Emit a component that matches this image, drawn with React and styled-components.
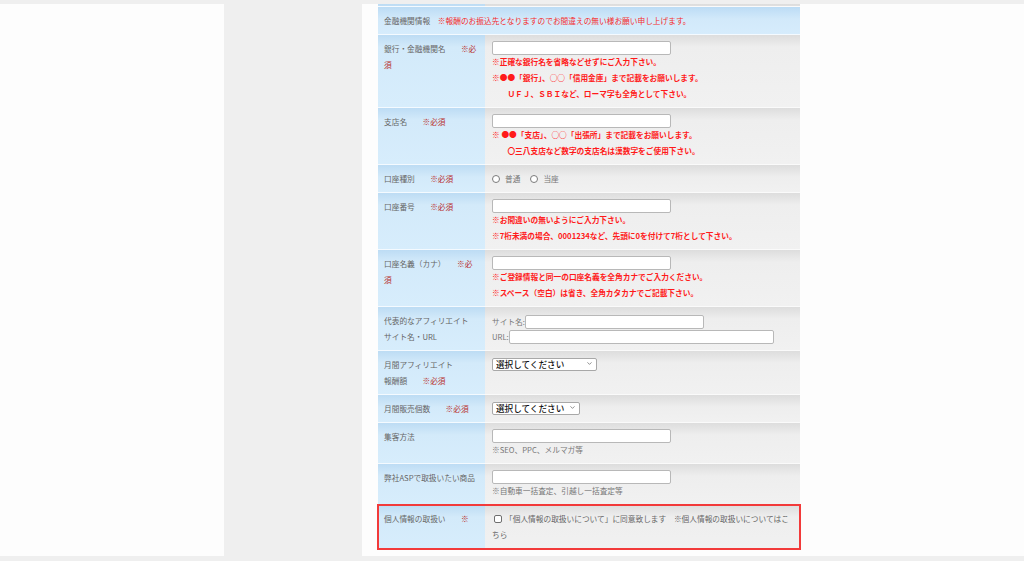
import React from 'react';
import styled, { createGlobalStyle } from 'styled-components';
import { ChevronDown } from 'lucide-react';

const GlobalStyle = createGlobalStyle`
    html, body {
        margin: 0;
        padding: 0;
        background: #efefef;
    }
    body {
        font-family: "Noto Sans CJK JP", "Noto Sans", sans-serif;
        font-size: 7.7px;
    }
`;

const Page = styled.div`
    height: 561px;
    padding-top: 4px;
    box-sizing: border-box;
    background: #efefef;
    overflow: hidden;
`;

const Main = styled.div`
    display: flex;
    height: 552px;
`;

const SideWhite = styled.div`
    width: 224px;
    background: #fdfdfd;
`;

const SideGray = styled.div`
    width: 138px;
    background: #efefef;
`;

const Content = styled.div`
    flex: 1;
    background: #fdfdfd;
    padding-left: 16px;
    overflow: hidden;
`;

const FormTable = styled.div`
    width: 422px;
    display: flex;
    flex-direction: column;
`;

const Row = styled.div`
    display: grid;
    grid-template-columns: 107px 1fr;
    ${p => p.$alert && `
        outline: 2px solid #f23a3a;
        outline-offset: -1px;
    `}
`;

const Label = styled.div`
    padding: ${p => (p.$stub ? '0' : '6px 8px 5px 6px')};
    height: ${p => (p.$stub ? '2px' : 'auto')};
    background: linear-gradient(#bddcf4, #d3eafa 12px, #d7edfc);
    border-bottom: 1px solid #f4faff;
    color: #666;
    line-height: 16px;
`;

const Data = styled.div`
    padding: ${p => (p.$stub ? '0' : '6px 7px 5px 7px')};
    height: ${p => (p.$stub ? '2px' : 'auto')};
    background: linear-gradient(#dddddd, #eeeeee 12px, #f1f1f1);
    border-bottom: 1px solid #fafafa;
    color: #666;
    line-height: 16px;
`;

const HeaderRow = styled.div`
    padding: 6px 6px 5px 6px;
    background: linear-gradient(#bcdcf5, #d2e9fa 12px, #d6ecfc);
    border-bottom: 1px solid #f4faff;
    color: #666;
    line-height: 16px;
`;

const HeaderNote = styled.span`
    color: #f52a2a;
`;

const Req = styled.span`
    color: #b8302e;
`;

const TextInput = styled.input`
    display: ${p => (p.$inline ? 'inline-block' : 'block')};
    width: ${p => p.$w || 179}px;
    height: 14px;
    box-sizing: border-box;
    margin: 0;
    padding: 0 3px;
    border: 1px solid #b8b8b8;
    border-radius: 2px;
    background: #fff;
    font: inherit;
`;

const Notes = styled.div`
    margin-top: -1px;
`;

const Note = styled.p`
    margin: 0;
    color: #ff1a1a;
    font-weight: 700;
    line-height: 16px;
    white-space: pre;
`;

const Hint = styled.p`
    margin: 0;
    color: #777;
    line-height: 16px;
`;

const AffLine = styled.div`
    display: flex;
    align-items: center;
    height: 15px;
    color: #777;
    &:first-child {
        margin-top: 1px;
    }
`;

const RadioGroup = styled.div`
    display: flex;
    align-items: center;
    gap: 10px;
    height: 16px;
`;

const Choice = styled.label`
    display: inline-flex;
    align-items: center;
    gap: 5px;
    color: #777;
`;

const Radio = styled.input`
    appearance: none;
    width: 8px;
    height: 8px;
    margin: 0;
    border: 1px solid #7a7a7a;
    border-radius: 50%;
    background: #fff;
`;

const CheckBox = styled.input`
    appearance: none;
    width: 8px;
    height: 8px;
    margin: 0 3px 0 2px;
    border: 1px solid #6f6f6f;
    border-radius: 2px;
    background: #fff;
    vertical-align: -1px;
`;

const SelectWrap = styled.span`
    position: relative;
    display: inline-block;
    height: 13px;
    vertical-align: top;
`;

const Select = styled.select`
    appearance: none;
    width: ${p => p.$w}px;
    height: 13px;
    margin: 0;
    padding: 0 12px 0 3px;
    border: 1px solid #a8a8a8;
    border-radius: 2px;
    background: #fff;
    color: #111;
    font-family: inherit;
    font-size: 8.6px;
    font-weight: 500;
    line-height: 11px;
`;

const Chevron = styled(ChevronDown)`
    position: absolute;
    right: 4px;
    top: 3px;
    pointer-events: none;
    color: #444;
`;

const AgreeText = styled.div`
    color: #666;
    line-height: 16px;
`;

const Dropdown = ({ width }) => (
    <SelectWrap>
        <Select $w={width} defaultValue="">
            <option value="">選択してください</option>
        </Select>
        <Chevron size={7} strokeWidth={2} />
    </SelectWrap>
);

const App = () => {
    return (
        <Page>
            <GlobalStyle />
            <Main>
                <SideWhite />
                <SideGray />
                <Content>
                    <FormTable>
                        <Row>
                            <Label $stub />
                            <Data $stub />
                        </Row>

                        <HeaderRow>
                            金融機関情報　<HeaderNote>※報酬のお振込先となりますのでお間違えの無い様お願い申し上げます。</HeaderNote>
                        </HeaderRow>

                        <Row>
                            <Label>銀行・金融機関名　　<Req>※必須</Req></Label>
                            <Data>
                                <TextInput type="text" />
                                <Notes>
                                    <Note>※正確な銀行名を省略などせずにご入力下さい。</Note>
                                    <Note>※●●「銀行」、○○「信用金庫」まで記載をお願いします。</Note>
                                    <Note>{'　　ＵＦＪ、ＳＢＩなど、ローマ字も全角として下さい。'}</Note>
                                </Notes>
                            </Data>
                        </Row>

                        <Row>
                            <Label>支店名　　<Req>※必須</Req></Label>
                            <Data>
                                <TextInput type="text" />
                                <Notes>
                                    <Note>※ ●●「支店」、○○「出張所」まで記載をお願いします。</Note>
                                    <Note>{'　　〇三八支店など数字の支店名は漢数字をご使用下さい。'}</Note>
                                </Notes>
                            </Data>
                        </Row>

                        <Row>
                            <Label>口座種別　　<Req>※必須</Req></Label>
                            <Data>
                                <RadioGroup>
                                    <Choice><Radio type="radio" name="kind" />普通</Choice>
                                    <Choice><Radio type="radio" name="kind" />当座</Choice>
                                </RadioGroup>
                            </Data>
                        </Row>

                        <Row>
                            <Label>口座番号　　<Req>※必須</Req></Label>
                            <Data>
                                <TextInput type="text" />
                                <Notes>
                                    <Note>※お間違いの無いようにご入力下さい。</Note>
                                    <Note>※7桁未満の場合、0001234など、先頭に0を付けて7桁として下さい。</Note>
                                </Notes>
                            </Data>
                        </Row>

                        <Row>
                            <Label>口座名義（カナ）　　<Req>※必須</Req></Label>
                            <Data>
                                <TextInput type="text" />
                                <Notes>
                                    <Note>※ご登録情報と同一の口座名義を全角カナでご入力ください。</Note>
                                    <Note>※スペース（空白）は省き、全角カタカナでご記載下さい。</Note>
                                </Notes>
                            </Data>
                        </Row>

                        <Row>
                            <Label>代表的なアフィリエイト<br />サイト名・URL</Label>
                            <Data>
                                <AffLine>サイト名:<TextInput $inline type="text" /></AffLine>
                                <AffLine>URL:<TextInput $inline $w={265} type="text" /></AffLine>
                            </Data>
                        </Row>

                        <Row>
                            <Label>月間アフィリエイト<br />報酬額　　<Req>※必須</Req></Label>
                            <Data>
                                <Dropdown width={105} />
                            </Data>
                        </Row>

                        <Row>
                            <Label>月間販売個数　　<Req>※必須</Req></Label>
                            <Data>
                                <Dropdown width={88} />
                            </Data>
                        </Row>

                        <Row>
                            <Label>集客方法</Label>
                            <Data>
                                <TextInput type="text" />
                                <Notes>
                                    <Hint>※SEO、PPC、メルマガ等</Hint>
                                </Notes>
                            </Data>
                        </Row>

                        <Row>
                            <Label>弊社ASPで取扱いたい商品</Label>
                            <Data>
                                <TextInput type="text" />
                                <Notes>
                                    <Hint>※自動車一括査定、引越し一括査定等</Hint>
                                </Notes>
                            </Data>
                        </Row>

                        <Row $alert>
                            <Label>個人情報の取扱い　　<Req>※</Req></Label>
                            <Data>
                                <AgreeText>
                                    <CheckBox type="checkbox" />「個人情報の取扱いについて」に同意致します　※個人情報の取扱いについてはこちら
                                </AgreeText>
                            </Data>
                        </Row>
                    </FormTable>
                </Content>
            </Main>
        </Page>
    );
};

export default App;
